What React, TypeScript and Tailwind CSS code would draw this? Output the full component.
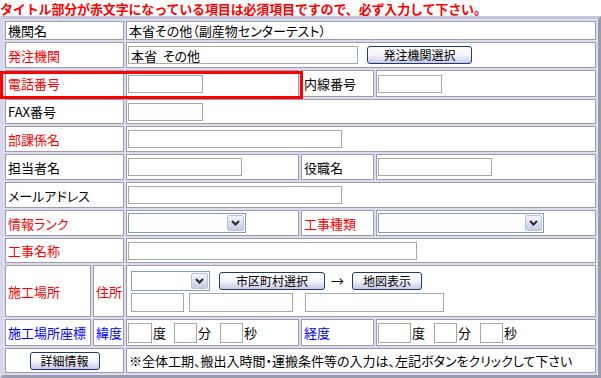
import type { ReactNode } from "react";

type Tone = "req" | "geo" | "plain";

const toneClass: Record<Tone, string> = {
  req: "text-[#ff0000]",
  geo: "text-[#0000ff]",
  plain: "text-black",
};

function Label({
  children,
  tone = "plain",
  className = "",
}: {
  children: ReactNode;
  tone?: Tone;
  className?: string;
}) {
  return (
    <div
      className={`flex items-center border border-[#9c9cac] bg-white px-[2px] whitespace-nowrap ${toneClass[tone]} ${className}`}
    >
      {children}
    </div>
  );
}

function Cell({ children, className = "" }: { children?: ReactNode; className?: string }) {
  return (
    <div className={`flex items-center border border-[#9c9cac] bg-white px-[1px] ${className}`}>
      {children}
    </div>
  );
}

function TextBox({ className = "", value = "" }: { className?: string; value?: string }) {
  return (
    <input
      type="text"
      readOnly
      defaultValue={value}
      className={`h-[18px] border border-[#a4aaa6] bg-white px-[2px] text-[13px] leading-none text-black outline-none ${className}`}
    />
  );
}

function Select({ className = "" }: { className?: string }) {
  return (
    <div className={`flex h-[20px] items-stretch justify-end border border-[#7f9db9] bg-white p-[1px] ${className}`}>
      <span className="flex w-[17px] items-center justify-center rounded-[2px] border border-[#b8c2d8] bg-gradient-to-b from-[#f4f6fc] to-[#c6cde2]">
        <svg width="9" height="6" viewBox="0 0 9 6" fill="none">
          <path d="M1 1l3.5 3.5L8 1" stroke="#2a2a2a" strokeWidth="2" />
        </svg>
      </span>
    </div>
  );
}

function XpButton({ children, className = "" }: { children: ReactNode; className?: string }) {
  return (
    <button
      type="button"
      className={`flex h-[18px] items-center justify-center rounded-[3px] border border-[#1d3b6e] bg-gradient-to-b from-white via-[#f4f4fa] to-[#c9c9e6] text-[12px] leading-none text-black ${className}`}
    >
      {children}
    </button>
  );
}

export default function App() {
  return (
    <div className="relative h-[378px] w-[601px] overflow-hidden bg-white font-['Noto_Sans_CJK_JP',sans-serif] text-[13px] leading-none [font-feature-settings:'palt']">
      {/* title keeps full-width punctuation, like the original */}
      <p className="h-[16px] pt-[2px] text-[13px] font-bold leading-none tracking-[-0.15px] whitespace-nowrap text-[#ff0000] [font-feature-settings:normal]">
        タイトル部分が赤文字になっている項目は必須項目ですので、必ず入力して下さい。
      </p>

      <div className="grid grid-cols-[86px_31px_173px_73px_220px] grid-rows-[19px_26px_27px_25px_26px_26px_26px_26px_25px_52px_27px_25px] gap-[2px] border-[3px] border-t-[#c4c4d8] border-l-[#d8d8ec] border-r-[#9a9aae] border-b-[#9a9aae] bg-[#dcdcee] p-[2px]">
        <Label className="col-span-2">機関名</Label>
        <Cell className="col-span-3 pl-[2px]">本省その他（副産物センターテスト）</Cell>

        <Label className="col-span-2" tone="req">発注機関</Label>
        <Cell className="col-span-3">
          <TextBox className="w-[230px]" value="本省  その他" />
          <XpButton className="ml-[9px] w-[105px]">発注機関選択</XpButton>
        </Cell>

        <Label className="col-span-2" tone="req">電話番号</Label>
        <Cell>
          <TextBox className="w-[75px]" />
        </Cell>
        <Label>内線番号</Label>
        <Cell>
          <TextBox className="w-[64px]" />
        </Cell>

        <Label className="col-span-2">FAX番号</Label>
        <Cell className="col-span-3">
          <TextBox className="w-[75px]" />
        </Cell>

        <Label className="col-span-2" tone="req">部課係名</Label>
        <Cell className="col-span-3">
          <TextBox className="w-[214px]" />
        </Cell>

        <Label className="col-span-2">担当者名</Label>
        <Cell>
          <TextBox className="w-[114px]" />
        </Cell>
        <Label>役職名</Label>
        <Cell>
          <TextBox className="w-[114px]" />
        </Cell>

        <Label className="col-span-2">メールアドレス</Label>
        <Cell className="col-span-3">
          <TextBox className="w-[214px]" />
        </Cell>

        <Label className="col-span-2" tone="req">情報ランク</Label>
        <Cell>
          <Select className="w-[118px]" />
        </Cell>
        <Label tone="req">工事種類</Label>
        <Cell>
          <Select className="w-[166px]" />
        </Cell>

        <Label className="col-span-2" tone="req">工事名称</Label>
        <Cell className="col-span-3">
          <TextBox className="w-[289px]" />
        </Cell>

        <Label tone="req">施工場所</Label>
        <Label tone="req">住所</Label>
        <Cell className="col-span-3 pl-[4px]">
          <div className="flex flex-col gap-[2px]">
            <div className="flex items-center">
              <Select className="h-[19px] w-[79px]" />
              <XpButton className="ml-[9px] w-[106px]">市区町村選択</XpButton>
              <span className="ml-[5px] mr-[7px] w-[15px] text-center">→</span>
              <XpButton className="w-[70px]">地図表示</XpButton>
            </div>
            <div className="flex items-center">
              <TextBox className="h-[19px] w-[53px]" />
              <TextBox className="ml-[5px] h-[19px] w-[104px]" />
              <TextBox className="ml-[12px] h-[19px] w-[139px]" />
            </div>
          </div>
        </Cell>

        <Label tone="geo">施工場所座標</Label>
        <Label tone="geo">緯度</Label>
        <Cell>
          <TextBox className="h-[20px] w-[24px]" />
          <span className="ml-[1px] mr-[8px]">度</span>
          <TextBox className="h-[20px] w-[23px]" />
          <span className="ml-[1px] mr-[9px]">分</span>
          <TextBox className="h-[20px] w-[23px]" />
          <span className="ml-[1px]">秒</span>
        </Cell>
        <Label tone="geo">経度</Label>
        <Cell>
          <TextBox className="h-[20px] w-[33px]" />
          <span className="ml-[1px] mr-[9px]">度</span>
          <TextBox className="h-[20px] w-[23px]" />
          <span className="ml-[1px] mr-[9px]">分</span>
          <TextBox className="h-[20px] w-[23px]" />
          <span className="ml-[1px]">秒</span>
        </Cell>

        <Cell className="col-span-2 justify-center">
          <XpButton className="h-[17px] w-[70px]">詳細情報</XpButton>
        </Cell>
        <Cell className="col-span-3 pl-[2px] whitespace-nowrap">
          ※全体工期、搬出入時間・運搬条件等の入力は、左記ボタンをクリックして下さい
        </Cell>
      </div>

      <div className="pointer-events-none absolute left-0 top-[71px] h-[28px] w-[303px] border-[3px] border-[#ff0000]" />
    </div>
  );
}
